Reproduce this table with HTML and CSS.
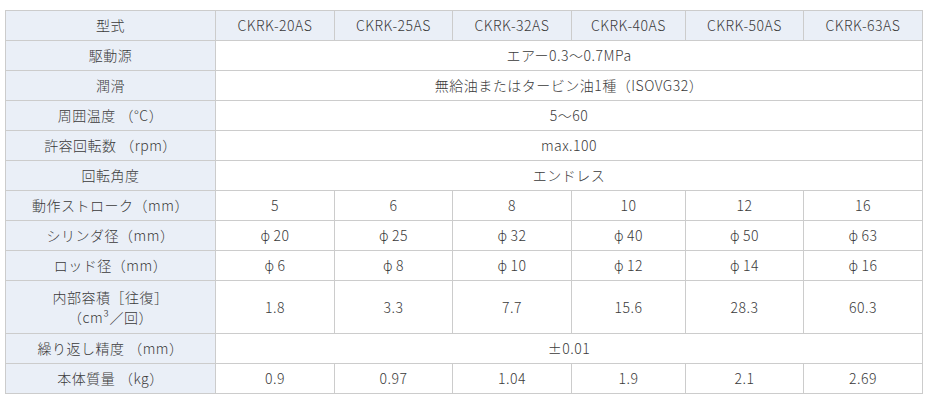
FILE: index.html
```html
<!DOCTYPE html>
<html lang="ja">
  <head>
    <meta charset="UTF-8">
    <title>CKRK 仕様</title>
    <link rel="stylesheet" href="styles.css">
  </head>
  <body>
    <div class="wrap">
      <table class="spec">
        <colgroup>
          <col class="col-label">
          <col class="col-a">
          <col class="col-b">
          <col class="col-a">
          <col class="col-c">
          <col class="col-b">
          <col class="col-a">
        </colgroup>
        <tr>
          <th>型式</th>
          <th>CKRK-20AS</th>
          <th>CKRK-25AS</th>
          <th>CKRK-32AS</th>
          <th>CKRK-40AS</th>
          <th>CKRK-50AS</th>
          <th>CKRK-63AS</th>
        </tr>
        <tr>
          <th>駆動源</th>
          <td colspan="6">エアー0.3〜0.7MPa</td>
        </tr>
        <tr>
          <th>潤滑</th>
          <td colspan="6">無給油またはタービン油1種（ISOVG32）</td>
        </tr>
        <tr>
          <th>周囲温度 （°C）</th>
          <td colspan="6">5〜60</td>
        </tr>
        <tr>
          <th>許容回転数 （rpm）</th>
          <td colspan="6">max.100</td>
        </tr>
        <tr>
          <th>回転角度</th>
          <td colspan="6">エンドレス</td>
        </tr>
        <tr>
          <th>動作ストローク（mm）</th>
          <td>5</td>
          <td>6</td>
          <td>8</td>
          <td>10</td>
          <td>12</td>
          <td>16</td>
        </tr>
        <tr>
          <th>シリンダ径（mm）</th>
          <td><span class="phi">ϕ</span>20</td>
          <td><span class="phi">ϕ</span>25</td>
          <td><span class="phi">ϕ</span>32</td>
          <td><span class="phi">ϕ</span>40</td>
          <td><span class="phi">ϕ</span>50</td>
          <td><span class="phi">ϕ</span>63</td>
        </tr>
        <tr>
          <th>ロッド径（mm）</th>
          <td><span class="phi">ϕ</span>6</td>
          <td><span class="phi">ϕ</span>8</td>
          <td><span class="phi">ϕ</span>10</td>
          <td><span class="phi">ϕ</span>12</td>
          <td><span class="phi">ϕ</span>14</td>
          <td><span class="phi">ϕ</span>16</td>
        </tr>
        <tr class="tall">
          <th>内部容積［往復］<br>（cm³／回）</th>
          <td>1.8</td>
          <td>3.3</td>
          <td>7.7</td>
          <td>15.6</td>
          <td>28.3</td>
          <td>60.3</td>
        </tr>
        <tr>
          <th>繰り返し精度 （mm）</th>
          <td colspan="6">±0.01</td>
        </tr>
        <tr>
          <th>本体質量 （kg）</th>
          <td>0.9</td>
          <td>0.97</td>
          <td>1.04</td>
          <td>1.9</td>
          <td>2.1</td>
          <td>2.69</td>
        </tr>
      </table>
    </div>
  </body>
</html>
```

FILE: styles.css
```css
body {
  margin: 0;
  background: #fff;
  font-family: "Noto Sans CJK JP", "Noto Sans", sans-serif;
  color: #3a3a3a;
}

.wrap {
  padding: 10px 0 0 5px;
}

.spec {
  width: 917px;
  border-collapse: collapse;
  table-layout: fixed;
  font-size: 14px;
  letter-spacing: 0.5px;
}

.col-label {
  width: 210px;
}

.col-a {
  width: 119px;
}

.col-b {
  width: 118px;
}

.col-c {
  width: 114px;
}

.spec th,
.spec td {
  border: 1px solid #ccc;
  padding: 4px 4px;
  line-height: 21px;
  text-align: center;
  font-weight: 300;
  white-space: nowrap;
}

.spec th {
  background: #eaeff7;
}

.spec .tall th,
.spec .tall td {
  padding: 6px 4px;
  line-height: 20px;
}

.phi {
  margin-right: 3px;
}
```
